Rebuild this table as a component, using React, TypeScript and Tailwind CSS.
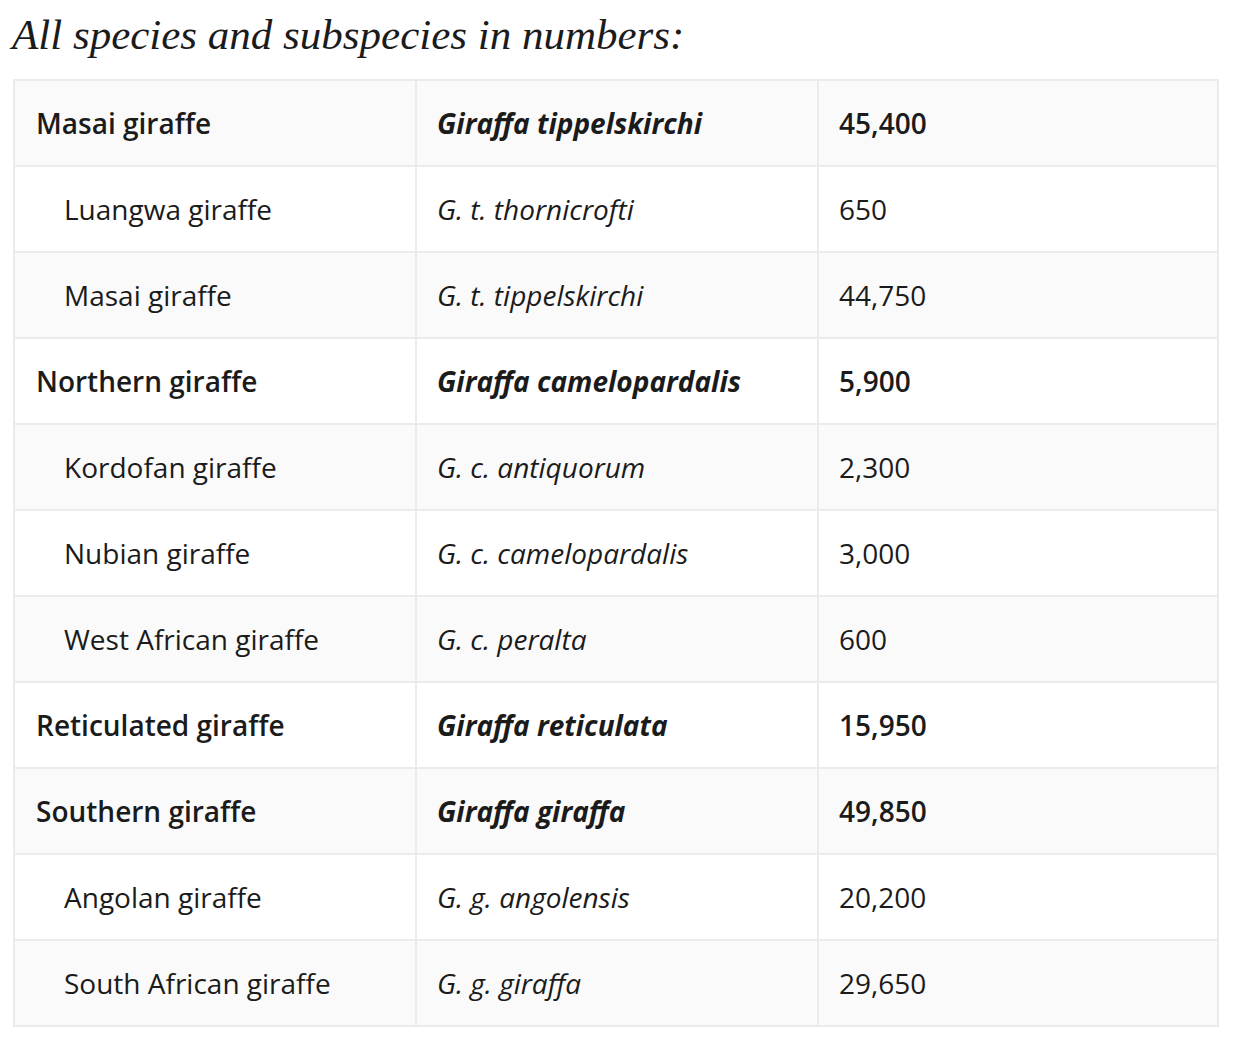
import React from "react";

type Row = { name: string; sci: string; num: string; main: boolean };

const rows: Row[] = [
  { name: "Masai giraffe", sci: "Giraffa tippelskirchi", num: "45,400", main: true },
  { name: "Luangwa giraffe", sci: "G. t. thornicrofti", num: "650", main: false },
  { name: "Masai giraffe", sci: "G. t. tippelskirchi", num: "44,750", main: false },
  { name: "Northern giraffe", sci: "Giraffa camelopardalis", num: "5,900", main: true },
  { name: "Kordofan giraffe", sci: "G. c. antiquorum", num: "2,300", main: false },
  { name: "Nubian giraffe", sci: "G. c. camelopardalis", num: "3,000", main: false },
  { name: "West African giraffe", sci: "G. c. peralta", num: "600", main: false },
  { name: "Reticulated giraffe", sci: "Giraffa reticulata", num: "15,950", main: true },
  { name: "Southern giraffe", sci: "Giraffa giraffa", num: "49,850", main: true },
  { name: "Angolan giraffe", sci: "G. g. angolensis", num: "20,200", main: false },
  { name: "South African giraffe", sci: "G. g. giraffa", num: "29,650", main: false },
];

export default function App() {
  return (
    <div className="min-h-[1041px] w-[1238px] bg-white text-[#1b1b1b]">
      <h2
        className="pl-[12px] pt-[9px] text-[43px] leading-[52px] italic font-normal"
        style={{ fontFamily: '"Liberation Serif", serif' }}
      >
        All species and subspecies in numbers:
      </h2>
      <table
        className="ml-[13px] mt-[18px] w-[1204px] border-collapse table-fixed text-[28px]"
        style={{ fontFamily: '"Open Sans", sans-serif' }}
      >
        <colgroup>
          <col className="w-[402px]" />
          <col className="w-[402px]" />
          <col className="w-[400px]" />
        </colgroup>
        <tbody>
          {rows.map((r, i) => (
            <tr key={i} className={i % 2 === 0 ? "bg-[#fafafa]" : "bg-white"}>
              <td
                className={
                  "h-[86px] border-2 border-[#ebebeb] pr-[20px] align-middle " +
                  (r.main ? "pl-[21px] font-semibold" : "pl-[49px] font-normal")
                }
              >
                {r.name}
              </td>
              <td
                className={
                  "h-[86px] border-2 border-[#ebebeb] px-[20px] align-middle italic " +
                  (r.main ? "font-bold" : "font-normal")
                }
              >
                {r.sci}
              </td>
              <td
                className={
                  "h-[86px] border-2 border-[#ebebeb] px-[20px] align-middle " +
                  (r.main ? "font-semibold" : "font-normal")
                }
              >
                {r.num}
              </td>
            </tr>
          ))}
        </tbody>
      </table>
    </div>
  );
}
